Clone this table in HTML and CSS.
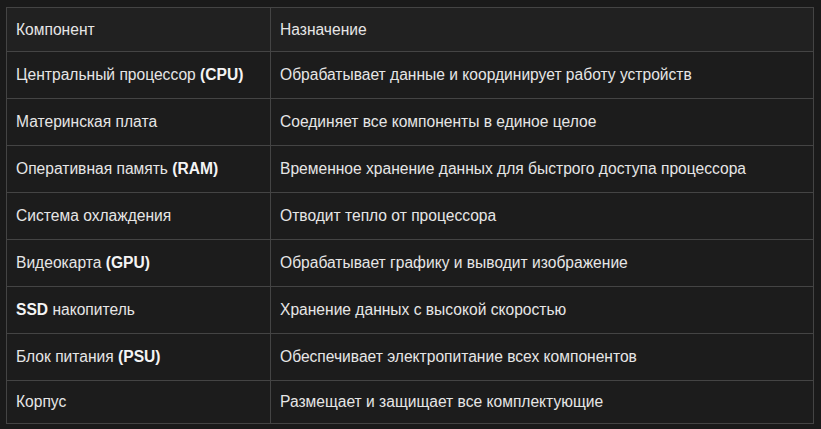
FILE: index.html
```html
<!DOCTYPE html>
<html lang="ru">
<head>
<meta charset="utf-8">
<link rel="stylesheet" href="styles.css">
</head>
<body>
<div class="wrap">
<table class="spec">
  <thead>
    <tr><th class="c1">Компонент</th><th>Назначение</th></tr>
  </thead>
  <tbody>
    <tr><td>Центральный процессор <strong>(CPU)</strong></td><td>Обрабатывает данные и координирует работу устройств</td></tr>
    <tr><td>Материнская плата</td><td>Соединяет все компоненты в единое целое</td></tr>
    <tr><td>Оперативная память <strong>(RAM)</strong></td><td>Временное хранение данных для быстрого доступа процессора</td></tr>
    <tr><td>Система охлаждения</td><td>Отводит тепло от процессора</td></tr>
    <tr><td>Видеокарта <strong>(GPU)</strong></td><td>Обрабатывает графику и выводит изображение</td></tr>
    <tr><td><strong>SSD</strong> накопитель</td><td>Хранение данных с высокой скоростью</td></tr>
    <tr><td>Блок питания <strong>(PSU)</strong></td><td>Обеспечивает электропитание всех компонентов</td></tr>
    <tr class="last"><td>Корпус</td><td>Размещает и защищает все комплектующие</td></tr>
  </tbody>
</table>
</div>
</body>
</html>
```
FILE: styles.css
```css
html, body {
  margin: 0;
  background: #1a1a1a;
}
.wrap {
  padding: 7px 7px 0 6px;
}
.spec {
  border-collapse: collapse;
  width: 808px;
  table-layout: fixed;
  font-family: "Liberation Sans", Arial, sans-serif;
  font-size: 15.6px;
  color: #e6e6e6;
  background: #1c1c1c;
}
.spec th, .spec td {
  border: 1px solid #444444;
  text-align: left;
  font-weight: normal;
  padding: 0 0 0 9px;
  vertical-align: middle;
  height: 46px;
}
.spec th {
  background: #212121;
  height: 43px;
}
.spec .c1 {
  width: 254px;
}
.spec tr.last td {
  height: 42px;
}
.spec strong {
  color: #f4f4f4;
  font-weight: bold;
}
```
